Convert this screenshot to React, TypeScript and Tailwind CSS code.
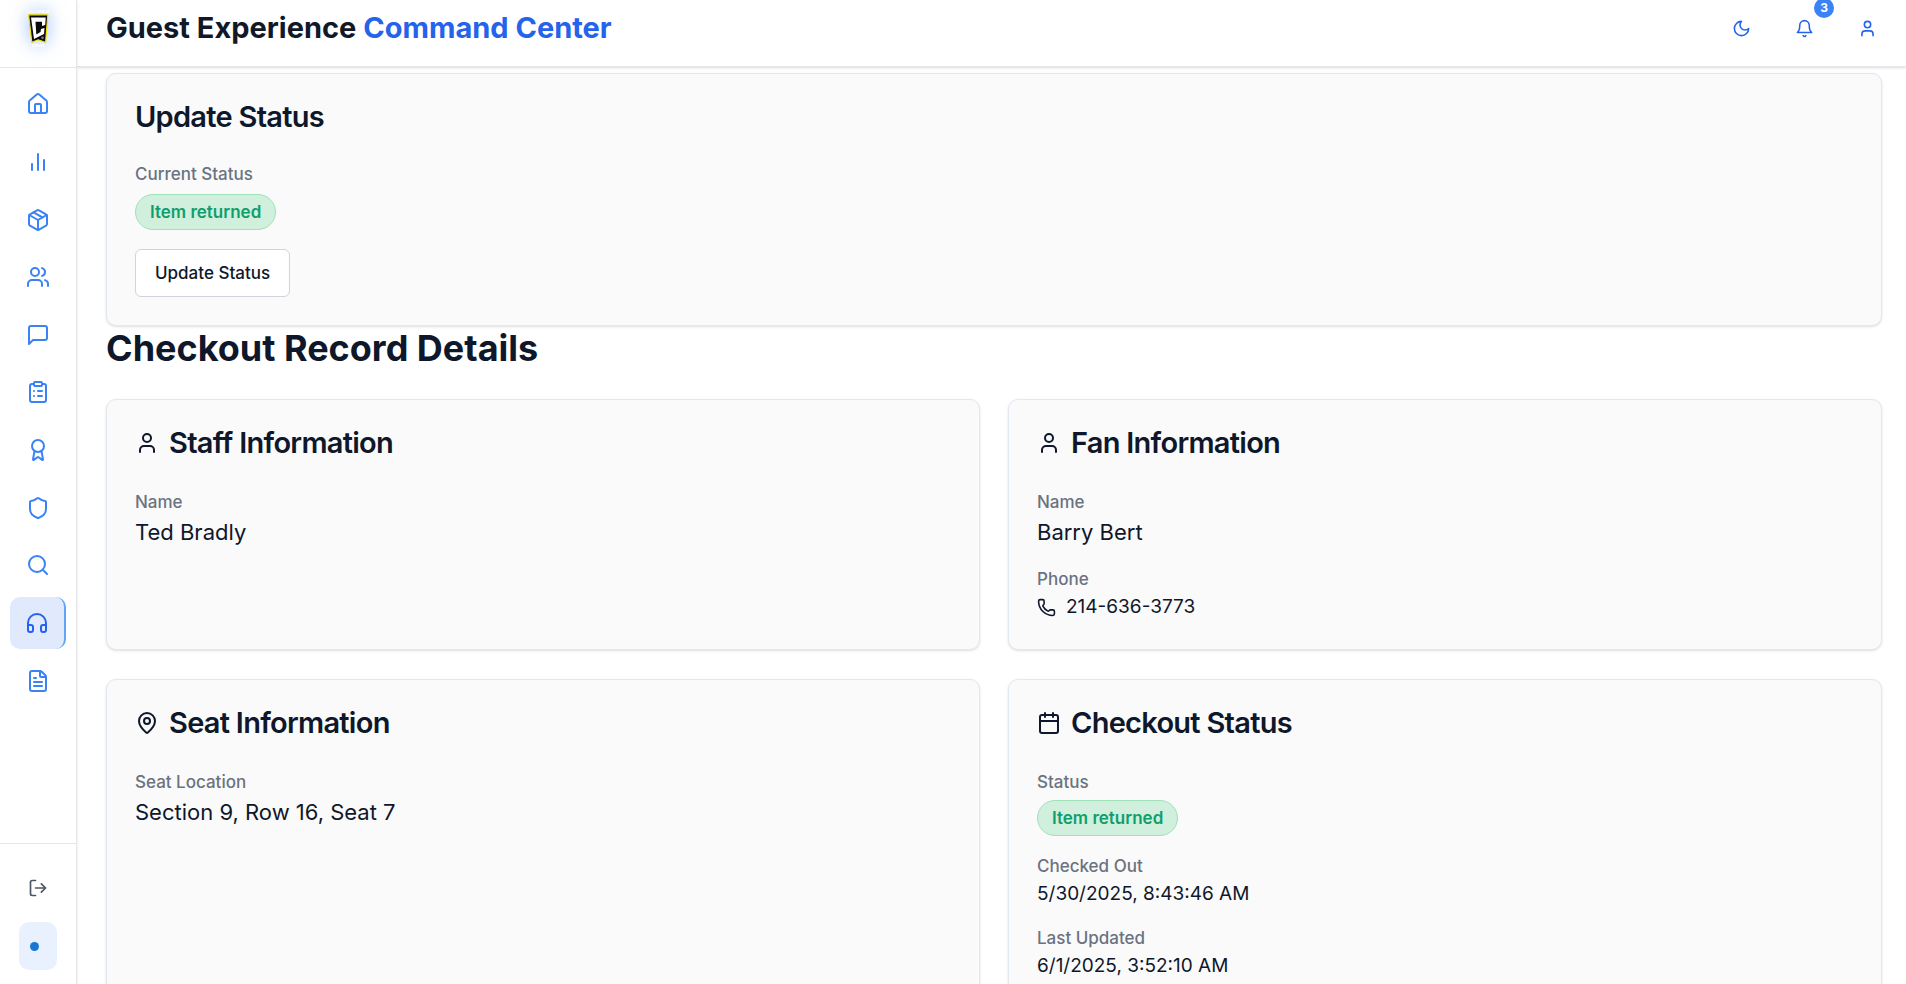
import React from 'react';
import {
    Award,
    Calendar,
    ClipboardList,
    FileText,
    Headphones,
    House,
    LogOut,
    MapPin,
    Package,
    Phone,
    Search,
    Shield,
    User,
    Users,
} from 'lucide-react';

type IconType = React.ComponentType<{ className?: string }>;

const makeIcon = (...paths: string[]): IconType => {
    const Icon: IconType = ({ className }) => (
        <svg className={className} viewBox="0 0 24 24" fill="none" stroke="currentColor" strokeWidth="2" strokeLinecap="round" strokeLinejoin="round">
            {paths.map((d) => (
                <path key={d} d={d} />
            ))}
        </svg>
    );
    return Icon;
};

const Bars = makeIcon('M18 20V10', 'M12 20V4', 'M6 20v-6');
const Message = makeIcon('M21 15a2 2 0 0 1-2 2H7l-4 4V5a2 2 0 0 1 2-2h14a2 2 0 0 1 2 2z');
const Moon = makeIcon('M12 3a6 6 0 0 0 9 9 9 9 0 1 1-9-9Z');
const Bell = makeIcon('M6 8a6 6 0 0 1 12 0c0 7 3 9 3 9H3s3-2 3-9', 'M10.3 21a1.94 1.94 0 0 0 3.4 0');

const navItems: { label: string; icon: IconType; active?: boolean }[] = [
    { label: 'Home', icon: House },
    { label: 'Analytics', icon: Bars },
    { label: 'Inventory', icon: Package },
    { label: 'Staff', icon: Users },
    { label: 'Messages', icon: Message },
    { label: 'Tasks', icon: ClipboardList },
    { label: 'Awards', icon: Award },
    { label: 'Security', icon: Shield },
    { label: 'Search', icon: Search },
    { label: 'Checkouts', icon: Headphones, active: true },
    { label: 'Reports', icon: FileText },
];

const Logo: React.FC = () => (
    <svg viewBox="0 0 32 44" className="h-11 w-8 overflow-visible drop-shadow-[0_0_9px_rgba(59,130,246,0.5)]">
        <text x="16" y="7" textAnchor="middle" fontSize="4" fontWeight="700" fill="#fff">
            COLUMBUS
        </text>
        <path d="M6.6 8.8h19.2L23.6 36.4l-7.4-2.6-6.4 2.6z" fill="#0a0a0a" stroke="#f0e014" strokeWidth="1.2" />
        <path d="M9 11.5h14.7l-.5 7.5-3.2 1v-4.2h-6.5l.8 12.7 4.2-2.5.5-3 3.5-1-.5 6L12 33z" fill="#fff" />
        <circle cx="20.5" cy="31.8" r="1.4" fill="#777" />
        <text x="16" y="41" textAnchor="middle" fontSize="4" fontWeight="700" fill="#fff">
            CREW
        </text>
    </svg>
);

const Sidebar: React.FC = () => (
    <aside className="sticky top-0 z-20 flex h-screen w-[77px] shrink-0 flex-col border-r border-[#e5e7eb] bg-white shadow-sm">
        <div className="flex h-[68px] shrink-0 justify-center border-b border-[#e5e7eb] pt-[6px]">
            <Logo />
        </div>
        <nav className="grid h-[649px] gap-[5px] p-[10px]">
            {navItems.map(({ label, icon: Icon, active }) => (
                <a
                    key={label}
                    href="#"
                    aria-label={label}
                    className={
                        active
                            ? 'flex items-center justify-center rounded-[10px] border-r-2 border-[#60a5fa] bg-[#e1eafd] text-[#2563eb]'
                            : 'flex items-center justify-center rounded-[10px] text-[#3b82f6]'
                    }
                >
                    <Icon className="size-6" />
                </a>
            ))}
        </nav>
        <div className="mt-auto flex flex-col items-center gap-[10px] border-t border-[#e5e7eb] pt-5 pb-[14px]">
            <button aria-label="Log out" className="flex h-12 w-[38px] items-center justify-center text-[#4b5563]">
                <LogOut className="size-5" />
            </button>
            <button aria-label="Status" className="flex h-12 w-[38px] items-center rounded-[10px] bg-[#eaf1fe] pl-[11px]">
                <span className="size-[9px] rounded-full bg-[#1976d2]" />
            </button>
        </div>
    </aside>
);

const Header: React.FC = () => (
    <header className="sticky top-0 z-10 flex h-[67px] items-start justify-between border-b border-[#e5e7eb] bg-white pt-1 pr-[15px] pl-[29px] shadow-sm">
        <h1 className="text-[29px] leading-[48px] font-bold text-[#111827]">
            Guest Experience <span className="text-[#2563eb]">Command Center</span>
        </h1>
        <div className="flex gap-[15px] text-[#2563eb]">
            <button aria-label="Dark mode" className="flex size-12 items-center justify-center">
                <Moon className="size-[19px]" />
            </button>
            <button aria-label="Notifications" className="relative flex size-12 items-center justify-center">
                <Bell className="size-[19px]" />
                <span className="absolute -top-[6px] -right-[6px] flex size-5 items-center justify-center rounded-full bg-[#3b82f6] text-[12px] leading-none font-bold text-white">
                    3
                </span>
            </button>
            <button aria-label="Account" className="flex size-12 items-center justify-center">
                <User className="size-[19px]" />
            </button>
        </div>
    </header>
);

const Card: React.FC<{ title: string; icon?: IconType; children: React.ReactNode }> = ({ title, icon: Icon, children }) => (
    <section className="rounded-[10px] border border-[#e2e8f0] bg-[#fafafa] p-7 shadow-sm">
        <h3 className="mb-[31px] flex items-center gap-[10px] text-[29px] leading-[29px] font-semibold tracking-tight">
            {Icon && <Icon className="size-6" />}
            {title}
        </h3>
        {children}
    </section>
);

const Field: React.FC<{ label: string; children: React.ReactNode }> = ({ label, children }) => (
    <div>
        <p className="text-[17px] leading-[28px] font-medium text-[#6b7280]">{label}</p>
        {children}
    </div>
);

const StatusBadge: React.FC = () => (
    <span className="flex h-9 w-fit items-center rounded-full border border-[#9fe2b8] bg-[#d0efdd] px-[14px] text-[17px] leading-[26px] font-semibold text-[#0f9f6e]">
        Item returned
    </span>
);

export default function App() {
    return (
        <div className="flex min-h-screen bg-white font-['Inter',sans-serif] text-[#0f172a]">
            <Sidebar />
            <div className="min-w-0 flex-1">
                <Header />
                <main className="pt-[6px] pr-6 pb-[29px] pl-[29px]">
                    <Card title="Update Status">
                        <p className="mb-2 text-[17px] leading-6 font-medium text-[#6b7280]">Current Status</p>
                        <StatusBadge />
                        <button className="mt-[19px] h-12 rounded-md border border-[#d1d5db] bg-white px-[19px] text-[17px] leading-[26px] font-medium">
                            Update Status
                        </button>
                    </Card>

                    <h2 className="mb-[29px] text-[36px] leading-[44px] font-bold">Checkout Record Details</h2>

                    <div className="grid grid-cols-2 gap-x-7 gap-y-[29px]">
                        <Card title="Staff Information" icon={User}>
                            <Field label="Name">
                                <p className="text-[22px] leading-[33px]">Ted Bradly</p>
                            </Field>
                        </Card>
                        <Card title="Fan Information" icon={User}>
                            <div className="flex flex-col gap-4">
                                <Field label="Name">
                                    <p className="text-[22px] leading-[33px]">Barry Bert</p>
                                </Field>
                                <Field label="Phone">
                                    <p className="flex items-center gap-[10px] text-[19px] leading-[28px]">
                                        <Phone className="size-[19px]" />
                                        214-636-3773
                                    </p>
                                </Field>
                            </div>
                        </Card>
                        <Card title="Seat Information" icon={MapPin}>
                            <Field label="Seat Location">
                                <p className="text-[22px] leading-[33px]">Section 9, Row 16, Seat 7</p>
                            </Field>
                        </Card>
                        <Card title="Checkout Status" icon={Calendar}>
                            <div className="flex flex-col gap-4">
                                <Field label="Status">
                                    <div className="pt-1">
                                        <StatusBadge />
                                    </div>
                                </Field>
                                <Field label="Checked Out">
                                    <p className="text-[19px] leading-[28px]">5/30/2025, 8:43:46 AM</p>
                                </Field>
                                <Field label="Last Updated">
                                    <p className="text-[19px] leading-[28px]">6/1/2025, 3:52:10 AM</p>
                                </Field>
                            </div>
                        </Card>
                    </div>
                </main>
            </div>
        </div>
    );
}
